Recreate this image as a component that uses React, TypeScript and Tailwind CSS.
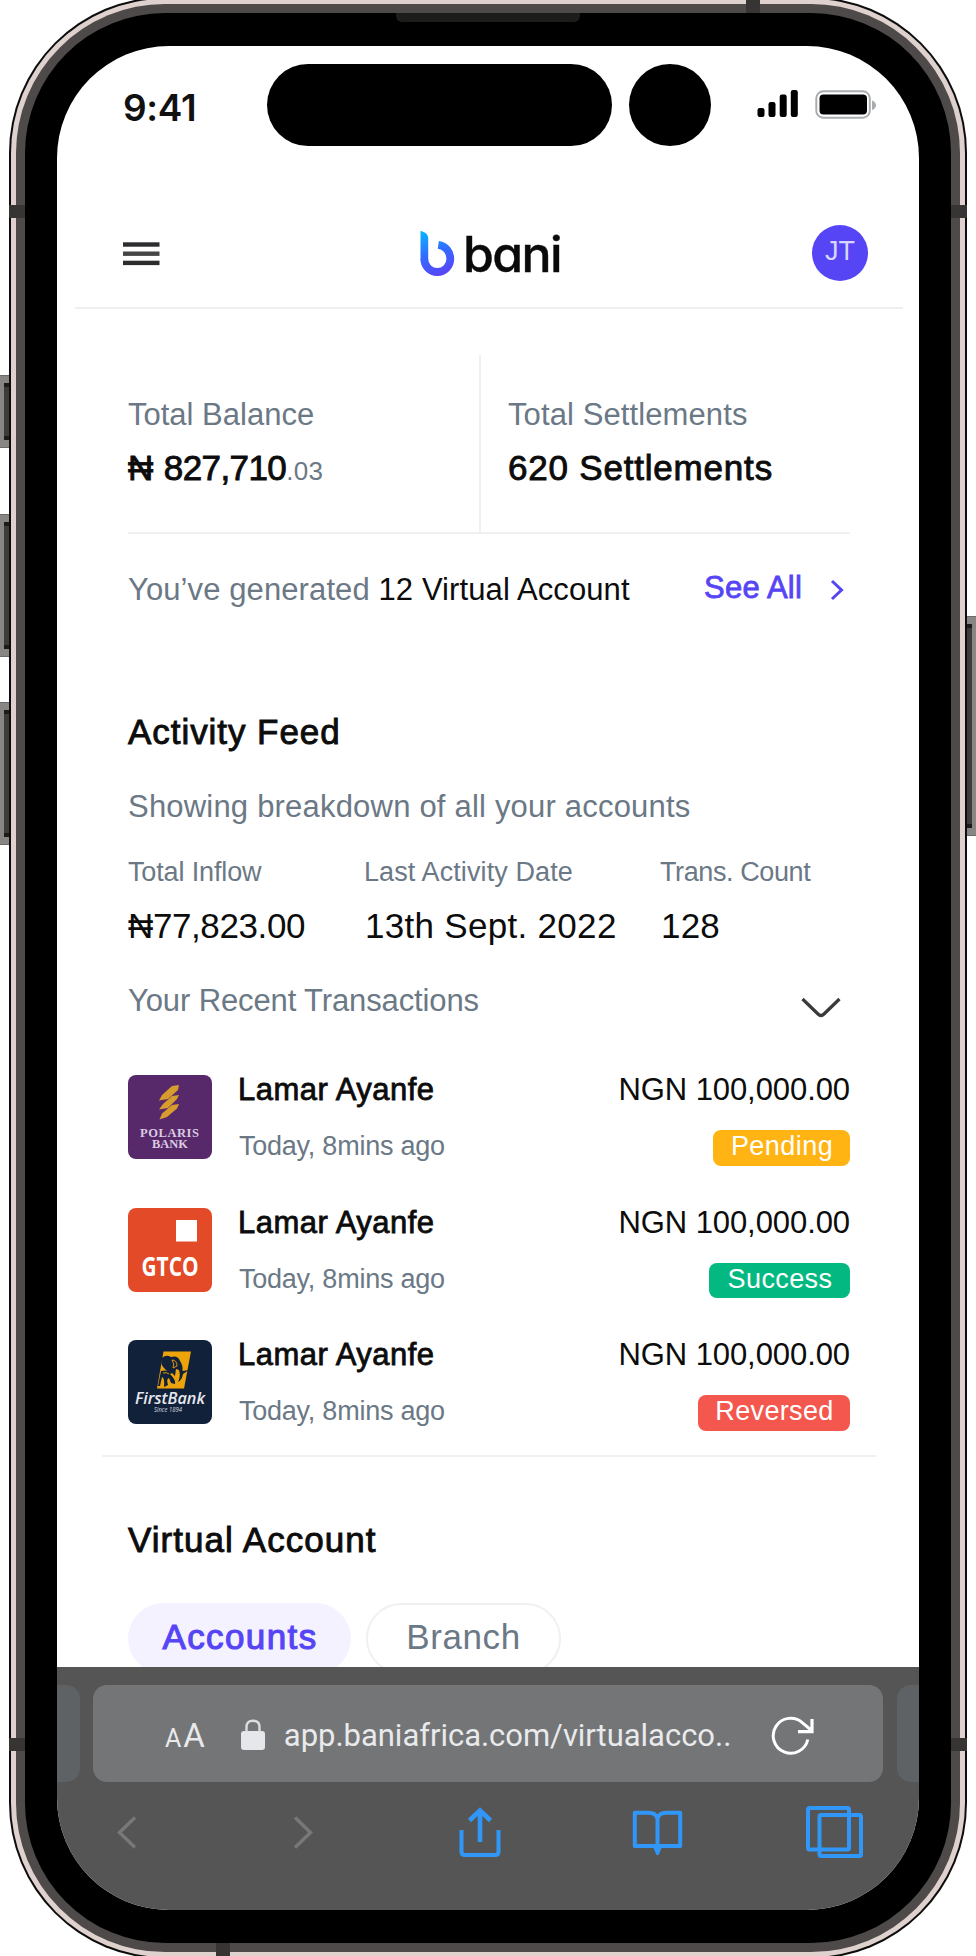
import React from "react";

const SANS = "font-['Liberation_Sans',sans-serif]";

function StatusBar() {
  return (
    <div className="flex h-[132px] items-start pt-[18px]">
      <div className="ml-[66px] w-[144px] pt-[22px] font-['Inter',sans-serif] text-[37px] leading-[44px] font-semibold tracking-[-0.3px] text-[#111]">
        9:41
      </div>
      <div className="h-[82px] w-[345px] rounded-full bg-black" />
      <div className="ml-[17px] h-[82px] w-[82px] rounded-full bg-black" />
      <svg className="mt-[26px] ml-[46px]" width="42" height="28" viewBox="0 0 42 28">
        <rect x="0.5" y="18" width="7" height="9" rx="2.2" />
        <rect x="11.5" y="12" width="7" height="15" rx="2.2" />
        <rect x="22.7" y="4.5" width="7" height="22.5" rx="2.2" />
        <rect x="33.8" y="0" width="7" height="27" rx="2.2" />
      </svg>
      <svg className="mt-[26px] ml-[16px]" width="62" height="29" viewBox="0 0 62 29">
        <rect x="1.3" y="1.3" width="53.5" height="26.4" rx="7" fill="none" stroke="#a9adaf" strokeWidth="2" />
        <rect x="4.5" y="4.5" width="47.5" height="20" rx="4" />
        <path d="M57 10.5 Q61 12 61 15.2 Q61 18.5 57 20 Z" fill="#a9adaf" />
      </svg>
    </div>
  );
}

function Header() {
  return (
    <div className="mr-4 ml-[18px] flex h-[131px] items-start border-b-2 border-[#efefef]">
      <svg className="mt-[64px] ml-[48px]" width="37" height="24" viewBox="0 0 37 24">
        <rect y="0.3" width="36.5" height="4.4" fill="#2b2d2e" />
        <rect y="9.5" width="36.5" height="4.4" fill="#454545" />
        <rect y="18.7" width="36.5" height="4.4" fill="#2b2d2e" />
      </svg>
      <div className="ml-[260px] flex items-start">
        <svg className="mt-[53px]" width="36" height="46" viewBox="0 0 36 46">
          <defs>
            <linearGradient id="bani" gradientUnits="userSpaceOnUse" x1="4" y1="0" x2="20" y2="44">
              <stop offset="0" stopColor="#09b4ff" />
              <stop offset="0.5" stopColor="#316dff" />
              <stop offset="1" stopColor="#5945f6" />
            </linearGradient>
          </defs>
          <path d="M0.5 0 C4.5 0.8 8.2 3 8.2 7.5 V29 H0.5 Z" fill="url(#bani)" />
          <path d="M4.3 28 A13 13 0 0 0 30.3 28 C30.3 20.5 25.5 14.8 18.3 13.8" fill="none" stroke="url(#bani)" strokeWidth="7.8" />
        </svg>
        <div className="mt-[48px] ml-[7px] font-['Inter',sans-serif] text-[50px] leading-[56px] font-medium tracking-[-1.6px] text-[#0a0a0a] [-webkit-text-stroke:0.4px_#0a0a0a] [font-feature-settings:'cv11']">
          bani
        </div>
      </div>
      <div className={`mt-[47px] mr-[35px] ml-auto flex h-[56px] w-[56px] items-center justify-center rounded-full bg-[#5645f5] pb-[3px] text-[27px] text-[#d9d4ff] ${SANS}`}>
        JT
      </div>
    </div>
  );
}

function Summary() {
  return (
    <>
      <div className="mt-[46px] flex h-[179px] border-b-2 border-[#f0f0f1]">
        <div className="w-[351px] pt-[40px]">
          <div className="text-[31px] leading-[40px] text-[#6b7885]">Total Balance</div>
          <div className="mt-[11px] flex items-baseline leading-[44px]">
            <span className="text-[35px] tracking-[-0.6px] text-[#0c0c0c] [word-spacing:2px] [-webkit-text-stroke:0.9px_#0c0c0c]">₦ 827,710</span>
            <span className="text-[26px] tracking-[0.4px] text-[#6b7885]">.03</span>
          </div>
        </div>
        <div className="flex-1 border-l-2 border-[#f0f0f1] pt-[40px] pl-[27px]">
          <div className="text-[31px] leading-[40px] tracking-[0.1px] text-[#6b7885]">Total Settlements</div>
          <div className="mt-[11px] text-[35px] leading-[44px] tracking-[0.8px] text-[#0c0c0c] [-webkit-text-stroke:0.9px_#0c0c0c]">
            620 Settlements
          </div>
        </div>
      </div>
      <div className="mt-[36px] flex h-[40px] text-[31px] leading-[40px] text-[#6b7885]">
        <div className="tracking-[0.1px]">
          You’ve generated <span className="text-[#0c0c0c]">12 Virtual Account</span>
        </div>
        <div className="-mt-[2px] ml-auto tracking-[0.2px] text-[#5645f5] [-webkit-text-stroke:0.8px_#5645f5]">See All</div>
        <svg className="mt-[8px] mr-[5px] ml-[27px]" width="16" height="24" viewBox="0 0 16 24">
          <path d="M3 3 L12.5 12 L3 21" fill="none" stroke="#5645f5" strokeWidth="3" />
        </svg>
      </div>
    </>
  );
}

function Activity() {
  return (
    <>
      <div className="mt-[100px] text-[35px] leading-[44px] tracking-[0.95px] text-[#0c0c0c] [-webkit-text-stroke:0.9px_#0c0c0c]">Activity Feed</div>
      <div className="mt-[33px] text-[31px] leading-[40px] tracking-[0.2px] text-[#6b7885]">Showing breakdown of all your accounts</div>
      <div className="mt-[27px] grid grid-cols-[236px_296px_1fr] gap-y-[14px] whitespace-nowrap">
        <div className="text-[27px] leading-[36px] tracking-[-0.14px] text-[#6b7885]">Total Inflow</div>
        <div className="text-[27px] leading-[36px] tracking-[0.1px] text-[#6b7885]">Last Activity Date</div>
        <div className="text-[27px] leading-[36px] tracking-[-0.4px] text-[#6b7885]">Trans. Count</div>
        <div className="text-[35px] leading-[44px] tracking-[-0.39px] text-[#0c0c0c]">₦77,823.00</div>
        <div className="pl-px text-[35px] leading-[44px] tracking-[0.3px] text-[#0c0c0c]">13th Sept. 2022</div>
        <div className="pl-px text-[35px] leading-[44px] tracking-[0.2px] text-[#0c0c0c]">128</div>
      </div>
      <div className="mt-[33px] flex h-[40px] justify-between">
        <div className="text-[31px] leading-[40px] tracking-[-0.12px] text-[#6b7885]">Your Recent Transactions</div>
        <svg className="mt-[14px] mr-[7px]" width="44" height="26" viewBox="0 0 44 26">
          <path d="M3.5 4 L19 19 Q22 22 25 19 L40.5 4" fill="none" stroke="#3a3a3a" strokeWidth="3.200" />
        </svg>
      </div>
    </>
  );
}

function PolarisLogo() {
  return (
    <svg width="84" height="84" viewBox="0 0 84 84">
      <rect width="84" height="84" fill="#57296a" />
      <g fill="#d69c2d">
        <path d="M51 10 L50 15 L40 24 L31 25.5 L34 20 L44 11 Z" />
        <path d="M51 20 L49 24 L40 33 L31 34.5 L35 29 L44 21 Z" />
        <path d="M51 29 L49 33.500 L39 42 L31.500 44.500 L34 38.500 L44 30 Z" />
      </g>
      <text x="12" y="62" fontSize="12.5" fontWeight="700" textLength="59" fill="#dccbe3" fontFamily="'Liberation Serif', serif">POLARIS</text>
      <text x="24" y="72.5" fontSize="12.5" fontWeight="700" textLength="36" lengthAdjust="spacingAndGlyphs" fill="#dccbe3" fontFamily="'Liberation Serif', serif">BANK</text>
    </svg>
  );
}

function GtcoLogo() {
  return (
    <svg width="84" height="84" viewBox="0 0 84 84">
      <rect width="84" height="84" fill="#e34a28" />
      <rect x="48" y="12" width="21" height="21.5" fill="#fff" />
      <text x="13.5" y="68" fontSize="26.5" fontWeight="700" textLength="57" lengthAdjust="spacingAndGlyphs" fill="#fff" fontFamily="'Open Sans', sans-serif">GTCO</text>
    </svg>
  );
}

function FirstBankLogo() {
  return (
    <svg width="84" height="84" viewBox="0 0 84 84">
      <rect width="84" height="84" fill="#12213a" />
      <path d="M35.5 11.5 H63 L56 48.5 H29 Z" fill="#eda40b" />
      <path
        d="M34 18 Q38 14 43 17 Q50 15 52 21 Q55 25 54.5 31 L61 30 L55 34 Q54 40 50 42 Q53 36 51 30 L48 29 L47 36 L44 33 L42 34 Q48 40 47 44 L43 43 L41 38 Q38 39 40 45 L36 47 Q37 38 34 37 L32 46 L30 46 L33 31 Q37 30 39 31 L36 28 Q32 24 34 18 Z"
        fill="#12213a"
      />
      <path d="M44 20 Q49 20 49 26 L45 28 Q47 24 44 20 Z M35 33 Q39 32 41 34" fill="none" stroke="#eda40b" strokeWidth="0.9" />
      <text x="7" y="64" fontSize="17" fontWeight="600" fontStyle="italic" textLength="70" lengthAdjust="spacingAndGlyphs" fill="#e6e9ee" fontFamily="'Open Sans', sans-serif">FirstBank</text>
      <text x="26" y="72" fontSize="6.5" fontStyle="italic" textLength="28" lengthAdjust="spacingAndGlyphs" fill="#d5d9e0" fontFamily="'Open Sans', sans-serif">Since 1894</text>
    </svg>
  );
}

const transactions = [
  { logo: <PolarisLogo />, status: "Pending", badge: "w-[137px] bg-[#ffb414] tracking-[0.45px]" },
  { logo: <GtcoLogo />, status: "Success", badge: "w-[141px] bg-[#03b981] tracking-[0.4px]" },
  { logo: <FirstBankLogo />, status: "Reversed", badge: "w-[152px] bg-[#f4574e] tracking-[0.35px]" },
];

function Transactions() {
  return (
    <div className="mt-[48px] flex flex-col gap-[38.5px]">
      {transactions.map((t) => (
        <div key={t.status} className="flex h-[94px]">
          <div className="mt-[6px] h-[84px] w-[84px] overflow-hidden rounded-lg">{t.logo}</div>
          <div className="ml-[26px]">
            <div className="text-[31px] leading-[41px] tracking-[0.48px] text-[#0c0c0c] [-webkit-text-stroke:0.8px_#0c0c0c]">Lamar Ayanfe</div>
            <div className="mt-[18px] pl-px text-[27px] leading-[36px] tracking-[-0.24px] text-[#6b7885]">Today, 8mins ago</div>
          </div>
          <div className="ml-auto flex flex-col items-end">
            <div className="text-[31px] leading-[41px] tracking-[-0.08px] text-[#0c0c0c]">NGN 100,000.00</div>
            <div className={`mt-[20px] h-[35.5px] shrink-0 rounded-lg pl-px text-center text-[27px] leading-[32px] text-white ${t.badge}`}>{t.status}</div>
          </div>
        </div>
      ))}
    </div>
  );
}

function VirtualAccount() {
  return (
    <>
      <div className="mt-[61px] text-[35px] leading-[44px] tracking-[1.05px] text-[#0c0c0c] [-webkit-text-stroke:0.9px_#0c0c0c]">Virtual Account</div>
      <div className="mt-[41px] flex gap-[15px] text-center text-[35px] leading-[44px]">
        <div className="h-[71px] w-[223px] rounded-full bg-[#f4f2ff] pt-[12px] pl-px tracking-[1.4px] text-[#5645f5] [-webkit-text-stroke:1.1px_#5645f5]">
          Accounts
        </div>
        <div className="h-[71px] w-[195px] rounded-full border-2 border-[#f0f0f1] pt-[10px] tracking-[0.6px] text-[#6b7885]">Branch</div>
      </div>
    </>
  );
}

function AddressBar() {
  return (
    <div className="flex h-[97px]">
      <div className="w-[23px] rounded-r-[14px] bg-[#5e6265]" />
      <div className="ml-[13px] flex w-[790px] rounded-[14px] bg-[#747577] font-['Roboto',sans-serif] text-[#e9eaec]">
        <div className="ml-[72px] flex items-baseline gap-[2px] pt-[29px] leading-[44px]">
          <span className="text-[25px]">A</span>
          <span className="text-[33px]">A</span>
        </div>
        <svg className="mt-[33px] ml-[35px]" width="26" height="34" viewBox="0 0 26 34">
          <rect x="1" y="13" width="24" height="19" rx="3" fill="#e6e7ea" />
          <path d="M6.5 14 V9 Q6.5 2.700 13 2.700 Q19.500 2.700 19.500 9 V14" fill="none" stroke="#dcdde0" strokeWidth="2.4" />
        </svg>
        <div className="ml-[18px] pt-[29px] text-[31px] leading-[44px] tracking-[-0.03px]">app.baniafrica.com/virtualacco..</div>
        <svg className="mt-[30px] mr-[68px] ml-auto" width="44" height="42" viewBox="0 0 44 42">
          <path d="M36.8 24.5 A17.5 17.5 0 1 1 31.5 7.8 L39.5 14.5" fill="none" stroke="#fff" strokeWidth="3" />
          <path d="M41 4 V16.7 H27" fill="none" stroke="#fff" strokeWidth="3.2" />
        </svg>
      </div>
      <div className="ml-[14px] flex-1 rounded-l-[14px] bg-[#5e6265]" />
    </div>
  );
}

function Toolbar() {
  const blue = { fill: "none", stroke: "#3097f8", strokeWidth: 4 };
  return (
    <div className="mt-[24px] mr-[56px] ml-[41px] flex justify-between">
      <svg width="57" height="52" viewBox="0 0 57 52">
        <path d="M37 11.5 L21.500 26.5 L37 41.5" fill="none" stroke="#77787a" strokeWidth="3.4" />
      </svg>
      <svg width="57" height="52" viewBox="0 0 57 52">
        <path d="M20 11.5 L35.5 26.5 L20 41.5" fill="none" stroke="#77787a" strokeWidth="3.4" />
      </svg>
      <svg width="57" height="52" viewBox="0 0 57 52">
        <g {...blue}>
          <path d="M9.500 24 V45.500 Q9.500 49 13 49 H43 Q46.500 49 46.500 45.500 V24" />
          <path d="M28 36 V6 M17.500 14.500 L28 4.500 L38.500 14.500" strokeWidth="4.6" />
        </g>
      </svg>
      <svg width="57" height="52" viewBox="0 0 57 52">
        <g {...blue}>
          <path d="M5.800 6.800 H20 Q26 6.800 28.500 12 Q31 6.800 37 6.800 H51.200 V40 H5.800 Z" strokeLinejoin="round" />
          <path d="M28.500 12 V46" />
        </g>
        <path d="M24 41 H33 L29.500 49 H27.500 Z" fill="#3097f8" />
      </svg>
      <svg width="57" height="52" viewBox="0 0 57 52">
        <g {...blue}>
          <rect x="2" y="2" width="41" height="41.5" rx="1.500" />
          <rect x="13.500" y="9" width="41.500" height="41" rx="1.500" />
        </g>
      </svg>
    </div>
  );
}

function SideButton({ place }: { place: string }) {
  return (
    <div className={`absolute flex w-[9px] border-y border-[#6c6a68] bg-[#878684] ${place}`}>
      <div className="my-[7px] ml-auto w-[5px] border-y-4 border-[#1b1b1a] bg-[#3d3c3a]" />
    </div>
  );
}

export default function App() {
  return (
    <div className={`relative h-[1956px] w-[976px] overflow-hidden bg-white ${SANS}`}>
      <div className="-mt-[3px] ml-[9px] h-[1962px] w-[958px] rounded-[156px] bg-[#0d0d0d] p-[2px]">
        <div className="h-full rounded-[154px] bg-[#dfd2ce] p-[5px]">
          <div className="h-full rounded-[149px] bg-[#4e4a49] p-[9px]">
            <div className="h-full rounded-[140px] bg-black px-[32px] py-[33px]">
              <div className="flex h-full flex-col overflow-hidden rounded-[112px] bg-white">
                <div className="h-[1621px] overflow-hidden">
                  <StatusBar />
                  <Header />
                  <div className="mr-[69px] ml-[71px]">
                    <Summary />
                    <Activity />
                    <Transactions />
                  </div>
                  <div className="mt-[27px] mr-[43px] ml-[45px] h-[2px] bg-[#f0f0f1]" />
                  <div className="ml-[71px]">
                    <VirtualAccount />
                  </div>
                </div>
                <div className="flex-1 bg-[#555] pt-[18px]">
                  <AddressBar />
                  <Toolbar />
                </div>
              </div>
            </div>
          </div>
        </div>
      </div>

      <SideButton place="left-0 top-[375px] h-[73px]" />
      <SideButton place="left-0 top-[514px] h-[143px]" />
      <SideButton place="left-0 top-[702px] h-[143px]" />
      <SideButton place="right-0 top-[616px] h-[220px] -scale-x-100" />
      <div className="absolute top-[205px] left-[9px] h-[13px] w-[16px] bg-[#373534]" />
      <div className="absolute top-[205px] right-[9px] h-[13px] w-[16px] bg-[#373534]" />
      <div className="absolute top-[1738px] left-[9px] h-[13px] w-[16px] bg-[#373534]" />
      <div className="absolute top-[1738px] right-[9px] h-[13px] w-[16px] bg-[#373534]" />
      <div className="absolute top-0 left-[746px] h-[13px] w-[14px] bg-[#373534]" />
      <div className="absolute bottom-0 left-[216px] h-[13px] w-[14px] bg-[#373534]" />
      <div className="absolute top-[13px] left-[396px] h-[9px] w-[184px] rounded-b-md bg-[#1c1c1b]" />
    </div>
  );
}
